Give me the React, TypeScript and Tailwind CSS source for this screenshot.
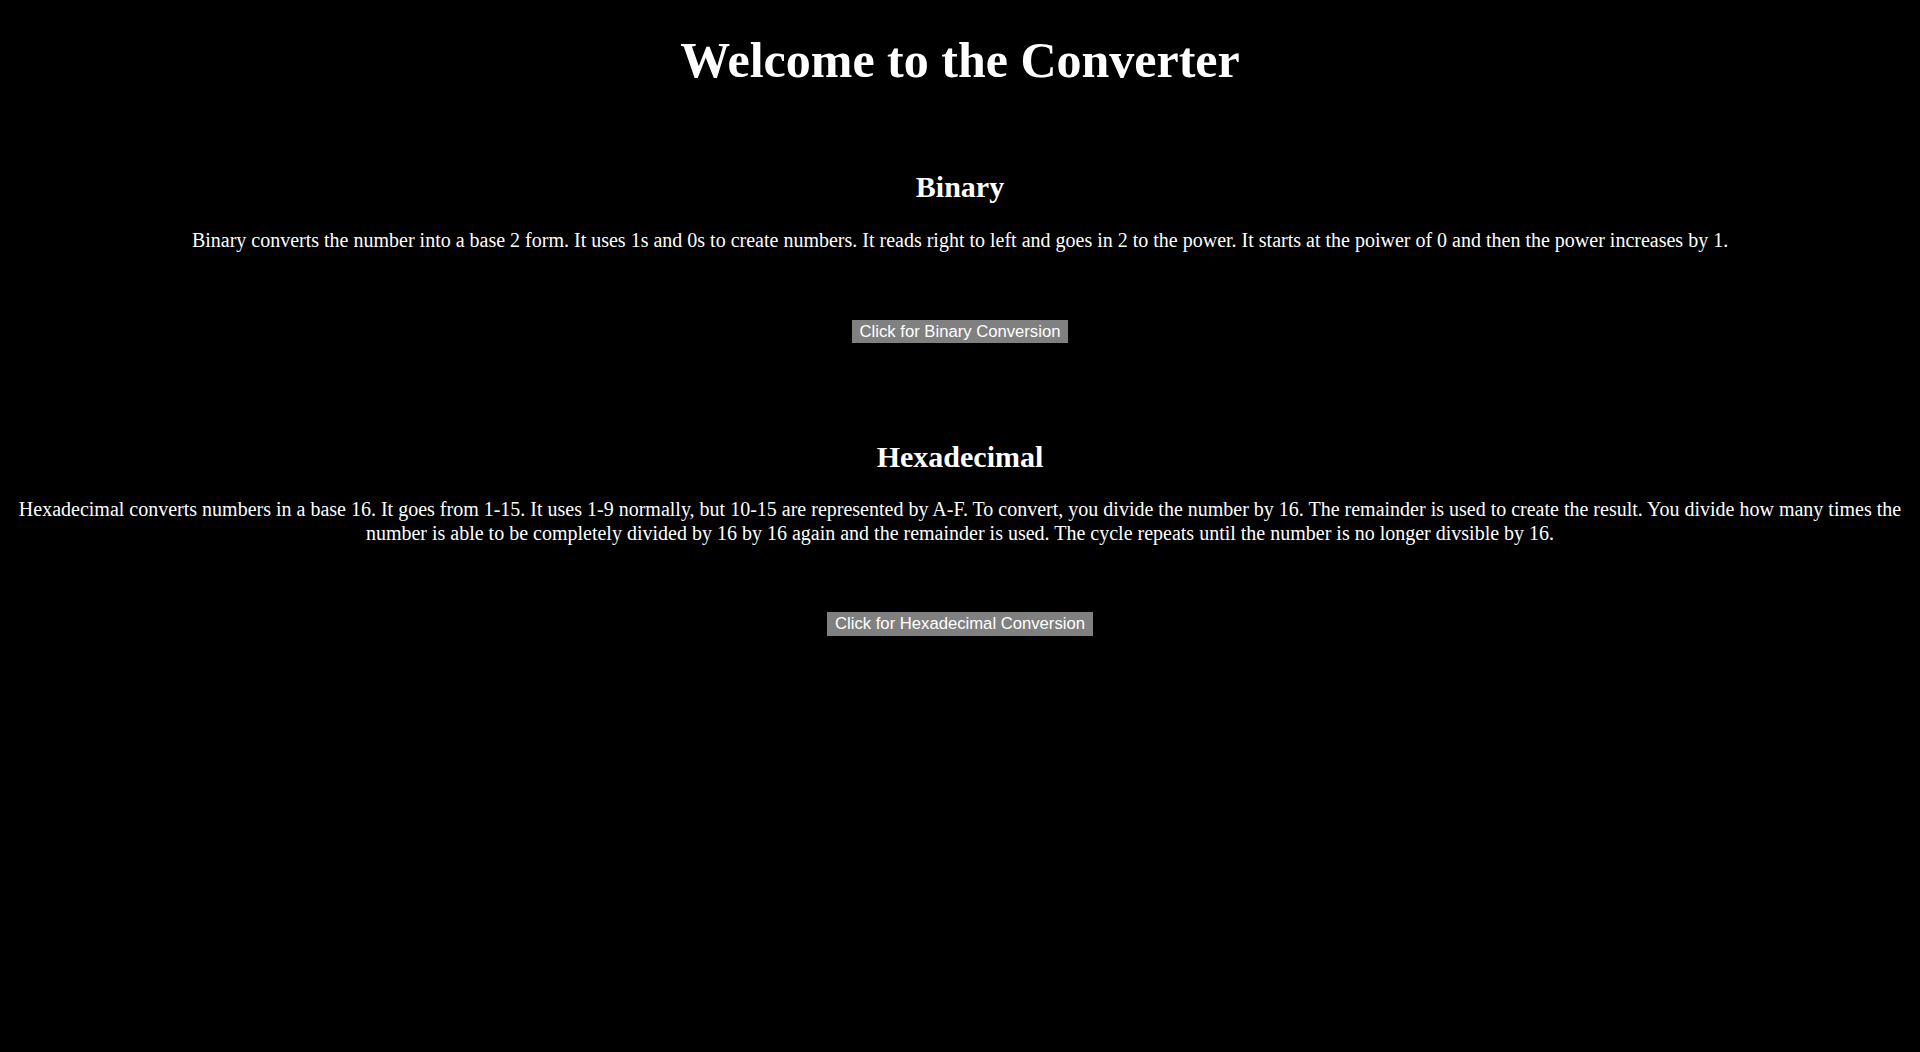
export default function App() {
  return (
    <div className="min-h-[1052px] bg-black px-[10px] text-center text-white font-['Liberation_Serif',serif]">
      <h1 className="pt-[32px] text-[50px] font-bold leading-[57.5px]">Welcome to the Converter</h1>

      <section className="mt-[80px]">
        <h2 className="text-[30px] font-bold leading-[34.5px]">Binary</h2>
        <p className="mt-[24.6px] text-[20px] leading-[23px]">
          Binary converts the number into a base 2 form. It uses 1s and 0s to create numbers. It reads right to left and
          goes in 2 to the power. It starts at the poiwer of 0 and then the power increases by 1.
        </p>
        <div className="mt-[68.6px] flex justify-center">
          <button className="h-[23px] bg-[#808080] px-[8px] text-[16.67px] leading-[23px] text-white font-['Liberation_Sans',Arial,sans-serif]">
            Click for Binary Conversion
          </button>
        </div>
      </section>

      <section className="mt-[96.5px]">
        <h2 className="text-[30px] font-bold leading-[34.5px]">Hexadecimal</h2>
        <p className="mt-[24px] text-[20px] leading-[23.5px]">
          Hexadecimal converts numbers in a base 16. It goes from 1-15. It uses 1-9 normally, but 10-15 are represented by
          A-F. To convert, you divide the number by 16. The remainder is used to create the result. You divide how many
          times the number is able to be completely divided by 16 by 16 again and the remainder is used. The cycle repeats
          until the number is no longer divsible by 16.
        </p>
        <div className="mt-[67px] flex justify-center">
          <button className="h-[24px] bg-[#808080] px-[8px] text-[16.67px] leading-[24px] text-white font-['Liberation_Sans',Arial,sans-serif]">
            Click for Hexadecimal Conversion
          </button>
        </div>
      </section>
    </div>
  );
}
